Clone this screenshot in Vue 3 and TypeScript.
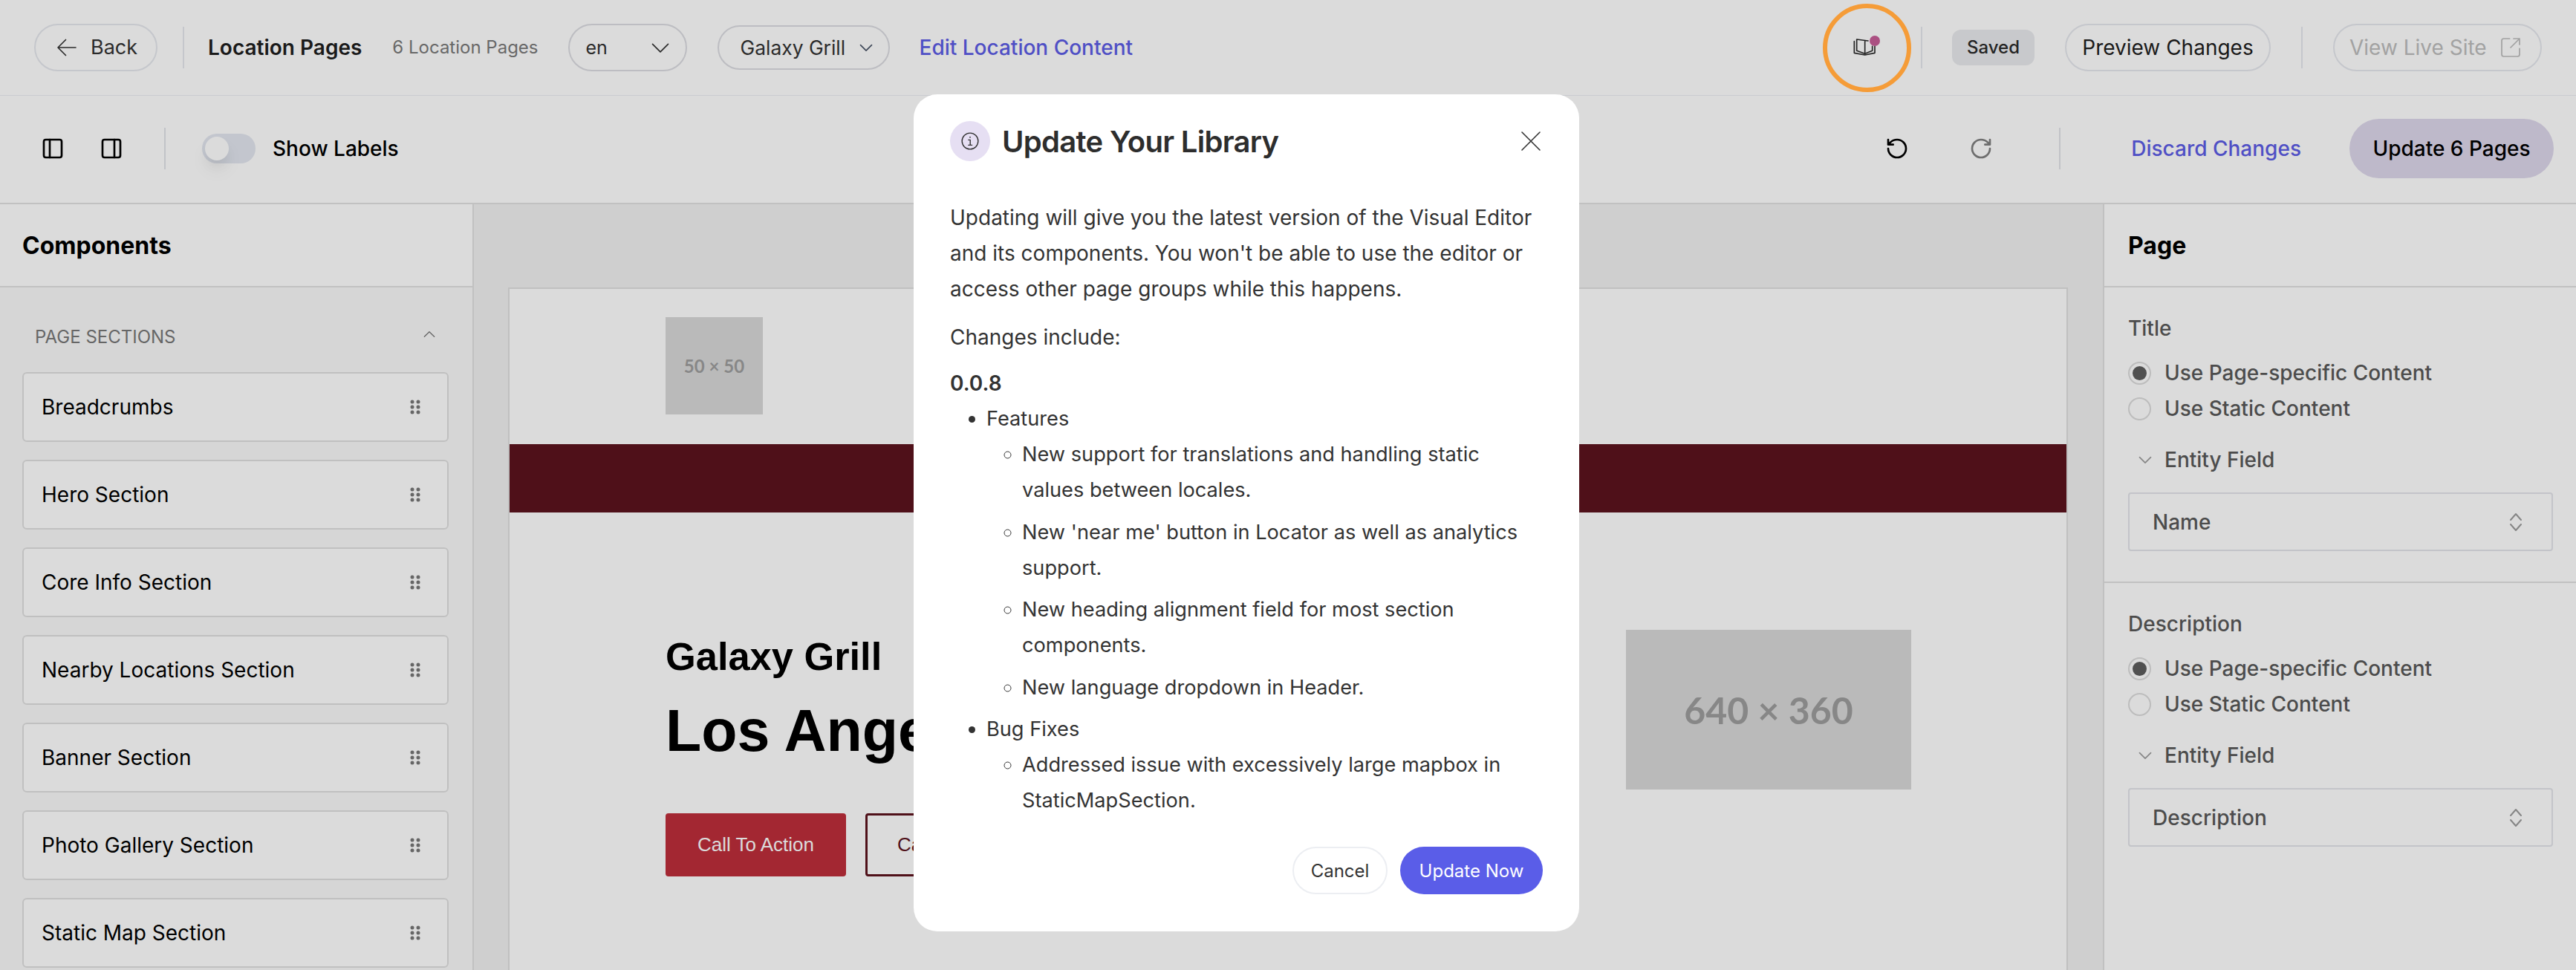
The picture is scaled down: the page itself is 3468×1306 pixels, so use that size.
<script setup lang="ts">
const components = [
  'Breadcrumbs',
  'Hero Section',
  'Core Info Section',
  'Nearby Locations Section',
  'Banner Section',
  'Photo Gallery Section',
  'Static Map Section',
]

const fields = [
  { label: 'Title', value: 'Name' },
  { label: 'Description', value: 'Description' },
]

const features = [
  'New support for translations and handling static values between locales.',
  "New 'near me' button in Locator as well as analytics support.",
  'New heading alignment field for most section components.',
  'New language dropdown in Header.',
]
</script>

<template>
  <div class="app">
    <header class="topbar">
      <button class="pill back">
        <svg class="ico-36" viewBox="0 0 24 24"><path d="M20 12H4M11 5l-7 7 7 7" /></svg>
        Back
      </button>
      <span class="vr first"></span>
      <strong class="page-title">Location Pages</strong>
      <span class="count">6 Location Pages</span>
      <button class="pill lang">
        en
        <svg class="ico-28" viewBox="0 0 24 24"><path d="M3 8l9 9 9-9" /></svg>
      </button>
      <button class="pill location">
        Galaxy Grill
        <svg class="ico-20" viewBox="0 0 24 24"><path d="M3 8l9 9 9-9" /></svg>
      </button>
      <a class="edit-link">Edit Location Content</a>

      <div class="topbar-right">
        <div class="book">
          <svg viewBox="0 0 70 50" width="70" height="50">
            <path d="M62 42 L108 48 M95 48 V100 M62 42 V88 L95 100 L125 88 V70 M52 50 V97 L95 105 L135 97 V70" transform="scale(.3333)" stroke-width="5" />
          </svg>
          <span class="book-dot"></span>
        </div>
        <span class="vr"></span>
        <span class="saved">Saved</span>
        <button class="pill preview">Preview Changes</button>
        <span class="vr"></span>
        <button class="pill live">
          View Live Site
          <svg class="ico-32" viewBox="0 0 24 24"><path d="M21 13v6a2 2 0 0 1-2 2H5a2 2 0 0 1-2-2V5a2 2 0 0 1 2-2h6M21 3l-9 9M15 3h6v6" /></svg>
        </button>
      </div>
    </header>

    <div class="toolbar">
      <svg class="ico-32 tool" viewBox="0 0 24 24"><rect x="3" y="3" width="18" height="18" rx="2" /><path d="M9 3v18" /></svg>
      <svg class="ico-32 tool second" viewBox="0 0 24 24"><rect x="3" y="3" width="18" height="18" rx="2" /><path d="M15 3v18" /></svg>
      <span class="vr tall"></span>
      <span class="toggle"><span class="thumb"></span></span>
      <span class="toggle-label">Show Labels</span>

      <div class="toolbar-right">
        <svg class="ico-32 tool" viewBox="0 0 24 24"><path d="M3 12a9 9 0 1 0 9-9 9.75 9.75 0 0 0-6.74 2.74L3 8M3 3v5h5" /></svg>
        <svg class="ico-32 tool redo" viewBox="0 0 24 24"><path d="M21 12a9 9 0 1 1-9-9c2.52 0 4.93 1 6.74 2.74L21 8M21 3v5h-5" /></svg>
        <span class="vr tall"></span>
        <a class="discard">Discard Changes</a>
        <button class="update-pages">Update 6 Pages</button>
      </div>
    </div>

    <div class="workspace">
      <aside class="left">
        <h2 class="panel-title">Components</h2>
        <div class="left-body">
          <div class="group-head">
            <span>PAGE SECTIONS</span>
            <svg class="ico-20" viewBox="0 0 24 24"><path d="M4 16l8-8 8 8" /></svg>
          </div>
          <div v-for="item in components" :key="item" class="component">
            {{ item }}
            <svg class="grip" viewBox="0 0 14 20" width="14" height="20">
              <circle v-for="n in 6" :key="n" :cx="n % 2 ? 3 : 11" :cy="3 + Math.floor((n - 1) / 2) * 7" r="2.5" />
            </svg>
          </div>
        </div>
      </aside>

      <main class="canvas">
        <div class="frame">
          <div class="site-head"><div class="ph small">50 × 50</div></div>
          <div class="site-bar"></div>
          <div class="hero">
            <div class="hero-text">
              <h2>Galaxy Grill</h2>
              <h1>Los Angeles</h1>
              <div class="cta">
                <a class="cta-main">Call To Action</a>
                <a class="cta-alt">Call To Action</a>
              </div>
            </div>
            <div class="ph large">640 × 360</div>
          </div>
          <h2 class="site-info">Information</h2>
        </div>
      </main>

      <aside class="right">
        <h2 class="panel-title">Page</h2>
        <section v-for="field in fields" :key="field.label" class="field">
          <div class="field-label">{{ field.label }}</div>
          <div class="radio-row"><span class="radio on"></span>Use Page-specific Content</div>
          <div class="radio-row"><span class="radio"></span>Use Static Content</div>
          <div class="entity">
            <svg class="ico-20" viewBox="0 0 24 24"><path d="M3 8l9 9 9-9" /></svg>
            Entity Field
          </div>
          <div class="select">
            {{ field.value }}
            <svg viewBox="0 0 18 26" width="18" height="26"><path d="M2 10l7-8 7 8M2 16l7 8 7-8" /></svg>
          </div>
        </section>
      </aside>
    </div>

    <div class="overlay"></div>

    <div class="dialog">
      <div class="dialog-head">
        <span class="info-badge">
          <svg viewBox="0 0 24 24" width="26" height="26">
            <circle cx="12" cy="12" r="10" stroke-width="1.3" />
            <path d="M10 10.5h2.2V17M10 17h4.4M11.7 7.2h.6" stroke-width="1.3" />
          </svg>
        </span>
        <h3>Update Your Library</h3>
        <svg class="close" viewBox="0 0 26 26" width="26" height="26"><path d="M1 1l24 24M25 1L1 25" /></svg>
      </div>
      <div class="dialog-body">
        <p>Updating will give you the latest version of the Visual Editor and its components. You won't be able to use the editor or access other page groups while this happens.</p>
        <p class="include">Changes include:</p>
        <strong class="version">0.0.8</strong>
        <ul class="outer">
          <li>Features
            <ul>
              <li v-for="f in features" :key="f">{{ f }}</li>
            </ul>
          </li>
          <li class="bugs">Bug Fixes
            <ul>
              <li>Addressed issue with excessively large mapbox in StaticMapSection.</li>
            </ul>
          </li>
        </ul>
      </div>
      <div class="dialog-foot">
        <button class="cancel">Cancel</button>
        <button class="confirm">Update Now</button>
      </div>
    </div>

    <!-- orange callout drawn over the screenshot -->
    <span class="callout"></span>
  </div>
</template>

<style>
body {
  margin: 0;
  background: #fff;
}
</style>

<style scoped>
* {
  box-sizing: border-box;
}

.app {
  position: relative;
  width: 3468px;
  height: 1306px;
  overflow: hidden;
  display: flex;
  flex-direction: column;
  font-family: Inter, "Liberation Sans", sans-serif;
  font-size: 28px;
  color: #000;
  background: #fff;
}

svg {
  fill: none;
  stroke: currentColor;
  stroke-width: 2;
  stroke-linecap: round;
  stroke-linejoin: round;
  flex: none;
  display: block;
}

.ico-20 { width: 20px; height: 20px; }
.ico-28 { width: 28px; height: 28px; }
.ico-32 { width: 32px; height: 32px; }
.ico-36 { width: 36px; height: 36px; }

button {
  font: inherit;
  color: inherit;
  background: none;
  cursor: pointer;
}

.topbar {
  height: 129px;
  flex: none;
  display: flex;
  align-items: center;
  padding: 0 46px 1px 46px;
  border-bottom: 1px solid #eceef3;
}

.pill {
  height: 64px;
  border: 2px solid #e6e8ee;
  border-radius: 32px;
  display: flex;
  align-items: center;
}

.vr {
  width: 2px;
  height: 56px;
  background: #e6e8ee;
  flex: none;
}

.back {
  width: 166px;
  padding: 0 0 0 24px;
  gap: 14px;
  color: #333;
  font-size: 27px;
}

.back svg { stroke-width: 1.1; }

.vr.first { margin-left: 34px; }

.page-title {
  margin-left: 32px;
  font-weight: 600;
  color: #1f1f1f;
}

.count {
  margin-left: 41px;
  font-size: 24px;
  color: #7a7a7a;
}

.lang {
  margin-left: 40px;
  width: 160px;
  padding: 0 20px 0 22px;
  justify-content: space-between;
  color: #333;
  font-size: 25px;
  border-color: #dcdde2;
}

.lang svg { stroke-width: 1.4; }

.location {
  margin-left: 41px;
  width: 232px;
  height: 60px;
  padding: 0 20px 0 29px;
  justify-content: space-between;
  font-size: 26.4px;
  color: #333;
  border-color: #dcdde2;
}

.location svg { color: #4a5568; }

.edit-link {
  margin-left: 40px;
  color: #5d5de6;
  font-weight: 500;
}

.topbar-right {
  margin-left: auto;
  display: flex;
  align-items: center;
}

.book {
  position: relative;
  width: 70px;
  height: 50px;
  margin-right: 37px;
  color: #2b2b2b;
}

.book-dot {
  position: absolute;
  left: 38px;
  top: 9px;
  width: 14px;
  height: 14px;
  border-radius: 50%;
  background: #c75e98;
}

.saved {
  margin-left: 40px;
  width: 111px;
  height: 48px;
  border-radius: 12px;
  background: #e9eaee;
  display: flex;
  align-items: center;
  justify-content: center;
  font-size: 24px;
  font-weight: 500;
  color: #2b2b2b;
}

.preview {
  margin-left: 41px;
  width: 277px;
  justify-content: center;
  color: #1f1f1f;
  margin-right: 41px;
}

.live {
  margin-left: 41px;
  width: 281px;
  padding-left: 20px;
  gap: 16px;
  color: #bdbdbd;
}

.live svg { stroke-width: 1.3; }

.toolbar {
  height: 146px;
  flex: none;
  display: flex;
  align-items: center;
  padding: 0 30px 2px 55px;
  border-bottom: 2px solid #e1e1e1;
}

.tool.second { margin-left: 47px; }

.vr.tall {
  margin-left: 55px;
  background: #e1e3e8;
}

.toggle {
  position: relative;
  margin-left: 49px;
  width: 72px;
  height: 40px;
  border-radius: 20px;
  background: #e3e7f0;
}

.thumb {
  position: absolute;
  left: 4px;
  top: 4px;
  width: 32px;
  height: 32px;
  border-radius: 50%;
  background: #fff;
  box-shadow: 0 10px 15px -3px rgba(0, 0, 0, 0.07), 0 14px 22px 4px rgba(0, 0, 0, 0.03);
}

.toggle-label {
  margin-left: 23px;
  font-weight: 500;
}

.toolbar-right {
  margin-left: auto;
  display: flex;
  align-items: center;
}

.redo {
  margin-left: 81px;
  color: #808080;
}

.toolbar-right .vr.tall { margin-left: 89px; }

.discard {
  margin-left: 95px;
  color: #5d5de6;
  font-weight: 500;
}

.update-pages {
  margin-left: 65px;
  width: 275px;
  height: 80px;
  border: 0;
  border-radius: 40px;
  background: #ded8ec;
  font-weight: 500;
}

.workspace {
  flex: 1;
  display: flex;
  min-height: 0;
}

.left {
  width: 638px;
  flex: none;
  display: flex;
  flex-direction: column;
  border-right: 2px solid #e1e1e1;
}

.panel-title {
  height: 112px;
  flex: none;
  margin: 0;
  display: flex;
  align-items: center;
  padding: 0 0 0 30px;
  font-size: 32px;
  font-weight: 700;
  border-bottom: 2px solid #e1e1e1;
}

.left-body {
  flex: 1;
  padding: 0 32px 0 30px;
  background: #fafafa;
}

.group-head {
  height: 114px;
  padding: 52px 16px 0 17px;
  display: flex;
  justify-content: space-between;
  font-size: 24px;
  color: #777;
}

.group-head svg { margin-top: 1px; stroke-width: 1.6; }

.component {
  height: 94px;
  margin-bottom: 24px;
  padding: 0 36px 0 24px;
  display: flex;
  align-items: center;
  justify-content: space-between;
  background: #fff;
  border: 2px solid #e0e0e0;
  border-radius: 6px;
  font-weight: 400;
}

.grip {
  fill: #777;
  stroke: none;
}

.canvas {
  flex: 1;
  min-width: 0;
  padding: 112px 47px 0 46px;
  background: #f2f2f2;
}

.frame {
  height: 100%;
  background: #fff;
  border: 2px solid #e0e0e0;
  border-bottom: 0;
  font-family: "Liberation Sans", Arial, sans-serif;
}

.site-head {
  height: 209px;
  padding: 38px 0 0 210px;
}

.ph {
  background: #d9d9d9;
  color: #9e9e9e;
  font-family: Lato, sans-serif;
  font-weight: 700;
  display: flex;
  align-items: center;
  justify-content: center;
}

.ph.small {
  width: 131px;
  height: 131px;
  font-size: 24px;
}

.site-bar {
  height: 92px;
  background: #5c131e;
}

.hero {
  display: flex;
  justify-content: space-between;
  padding: 158px 209px 0 210px;
}

.hero-text h2 {
  margin: 6px 0 0;
  font-size: 52.4px;
  line-height: 60px;
  font-weight: 700;
}

.hero-text h1 {
  margin: 22px 0 0;
  font-size: 79px;
  line-height: 96px;
  font-weight: 700;
}

.cta {
  display: flex;
  gap: 26px;
  margin-top: 63px;
  font-size: 26px;
}

.cta a {
  width: 243px;
  height: 85px;
  border-radius: 4px;
  display: flex;
  align-items: center;
  justify-content: center;
}

.cta-main {
  background: #be2e3b;
  color: #fff;
}

.cta-alt {
  border: 3px solid #5c131e;
  color: #5c131e;
}

.ph.large {
  width: 384px;
  height: 215px;
  font-size: 50px;
}

.site-info {
  margin: 119px 0 0 210px;
  font-size: 52px;
  line-height: 60px;
  font-weight: 700;
}

.right {
  width: 637px;
  flex: none;
  border-left: 2px solid #e1e1e1;
}

.right .panel-title {
  padding-left: 32px;
}

.field {
  height: 398px;
  padding: 37px 31px 0 32px;
  border-bottom: 2px solid #e1e1e1;
  color: #595959;
  font-weight: 500;
}

.field:last-child {
  border-bottom: 0;
  height: auto;
}

.field-label {
  line-height: 36px;
  margin-bottom: 18px;
}

.radio-row {
  height: 48px;
  display: flex;
  align-items: center;
  gap: 18px;
}

.radio {
  width: 31px;
  height: 31px;
  border-radius: 50%;
  border: 2px solid #dcdcdc;
  background: #fff;
  padding: 4px;
  background-clip: padding-box;
}

.radio.on::before {
  content: "";
  display: block;
  width: 19px;
  height: 19px;
  border-radius: 50%;
  background: #5e5e5e;
}

.entity {
  margin-top: 24px;
  height: 42px;
  display: flex;
  align-items: center;
  gap: 16px;
  padding-left: 13px;
}

.entity svg { color: #9c9c9c; }

.select {
  margin-top: 23px;
  height: 79px;
  border: 2px solid #e3e5ea;
  border-radius: 4px;
  display: flex;
  align-items: center;
  justify-content: space-between;
  padding: 0 39px 0 31px;
}

.select svg {
  color: #9c9c9c;
}

.overlay {
  position: absolute;
  inset: 0;
  background: rgba(0, 0, 0, 0.14);
}

.dialog {
  position: absolute;
  left: 1230px;
  top: 127px;
  width: 896px;
  height: 1127px;
  background: #fff;
  border-radius: 32px;
  padding: 36px 49px 0;
  display: flex;
  flex-direction: column;
  color: #333;
}

.dialog-head {
  height: 54px;
  flex: none;
  display: flex;
  align-items: center;
  gap: 16px;
}

.info-badge {
  width: 54px;
  height: 54px;
  border-radius: 50%;
  background: #e6dff3;
  display: flex;
  align-items: center;
  justify-content: center;
}

.dialog-head h3 {
  margin: 0;
  font-size: 40px;
  font-weight: 600;
  letter-spacing: -0.7px;
  color: #2d2d2d;
}

.close {
  margin-left: auto;
  margin-right: 3px;
  color: #333;
  stroke-width: 1.6;
}

.dialog-body {
  height: 871px;
  margin-top: 52px;
  flex: none;
  overflow: hidden;
  line-height: 48px;
}

.dialog-body p {
  margin: 0;
}

.include {
  margin-top: 17px !important;
}

.version {
  display: block;
  margin-top: 14px;
  font-weight: 600;
}

.outer {
  margin: 0;
  padding-left: 49px;
  list-style: disc;
  font-size: 27.2px;
}

.outer ul {
  margin: 0;
  padding-left: 48px;
  list-style: circle;
}

.outer ul li + li {
  margin-top: 8.5px;
}

.bugs {
  margin-top: 8px;
}

.dialog-foot {
  display: flex;
  justify-content: flex-end;
  gap: 17px;
}

.cancel,
.confirm {
  height: 64px;
  border-radius: 32px;
  font-size: 24px;
}

.cancel {
  width: 128px;
  border: 2px solid #eceef2;
  color: #333;
  background: #fff;
}

.confirm {
  width: 192px;
  border: 0;
  background: #5a5de8;
  color: #fff;
}

.callout {
  position: absolute;
  left: 2454px;
  top: 5px;
  width: 119px;
  height: 119px;
  border: 6px solid #f59c38;
  border-radius: 50%;
}
</style>
